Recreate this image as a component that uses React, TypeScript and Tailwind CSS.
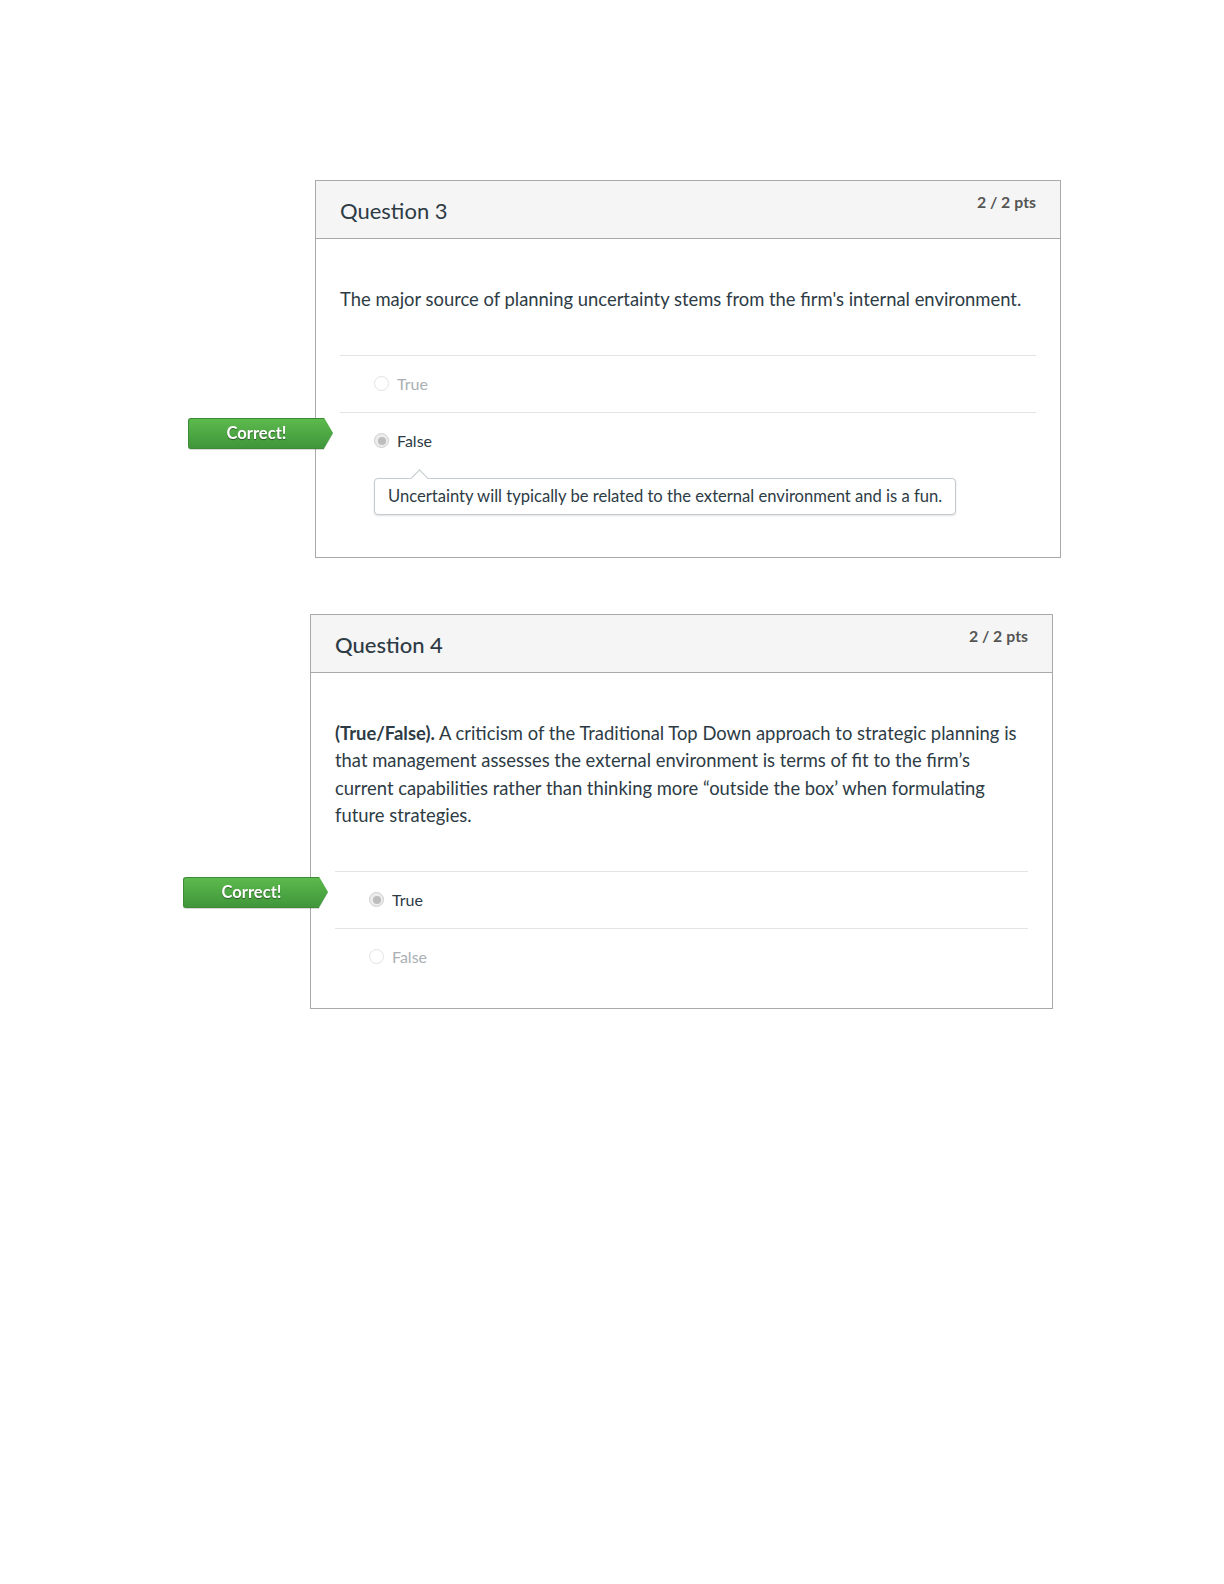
import * as React from "react";

type Answer = { label: string; selected: boolean; correct?: boolean; comment?: string };

type Question = {
  title: string;
  titleWeight: string;
  points: string;
  body: React.ReactNode;
  answers: Answer[];
  offset: string;
  width: string;
  footer: string;
};

const FONT = "font-['Lato','Open_Sans','Liberation_Sans',sans-serif]";

const QUESTIONS: Question[] = [
  {
    title: "Question 3",
    titleWeight: "font-normal",
    points: "2 / 2",
    body: <>The major source of planning uncertainty stems from the firm's internal environment.</>,
    answers: [
      { label: "True", selected: false },
      {
        label: "False",
        selected: true,
        correct: true,
        comment: "Uncertainty will typically be related to the external environment and is a fun.",
      },
    ],
    offset: "ml-[315px]",
    width: "w-[746px]",
    footer: "pb-[23px]",
  },
  {
    title: "Question 4",
    titleWeight: "font-medium",
    points: "2 / 2",
    body: (
      <>
        <span className="font-bold">(True/False).</span> A criticism of the Traditional Top Down approach to strategic
        planning is
        <br />
        that management assesses the external environment is terms of fit to the firm’s
        <br />
        current capabilities rather than thinking more “outside the box’ when formulating
        <br />
        future strategies.
      </>
    ),
    answers: [
      { label: "True", selected: true, correct: true },
      { label: "False", selected: false },
    ],
    offset: "ml-[310px]",
    width: "w-[743px]",
    footer: "pb-[23px]",
  },
];

function CorrectFlag() {
  return (
    <div className="absolute left-[-152px] top-[5px] flex h-[31px] drop-shadow-[0_1px_0_rgba(0,0,0,0.15)]">
      <div className="flex w-[136px] items-center justify-center rounded-l-[3px] border border-r-0 border-[#3d8b35] bg-gradient-to-b from-[#5cba4d] to-[#40963a] text-[16.5px] font-bold text-white [text-shadow:0_1px_1px_rgba(0,0,0,0.45)]">
        Correct!
      </div>
      <div className="h-[31px] w-[9px] bg-gradient-to-b from-[#5cba4d] to-[#40963a] [clip-path:polygon(0_0,100%_50%,0_100%)]" />
    </div>
  );
}

function Radio({ checked }: { checked: boolean }) {
  return checked ? (
    <span className="flex h-[15px] w-[15px] shrink-0 items-center justify-center rounded-full border border-[#cfcfcf] bg-[#ececec]">
      <span className="h-[8px] w-[8px] rounded-full bg-[#bdbdbd]" />
    </span>
  ) : (
    <span className="h-[15px] w-[15px] shrink-0 rounded-full border border-[#e2e2e2] bg-white" />
  );
}

function AnswerRow({ answer }: { answer: Answer }) {
  return (
    <div className="relative border-t border-[#e2e4e6]">
      {answer.correct && <CorrectFlag />}
      <div className="flex h-[56px] items-center gap-[8px] pl-[34px]">
        <Radio checked={answer.selected} />
        <span className={answer.selected ? "text-[16px] text-[#2d3b45]" : "text-[16px] text-[#aab0b4]"}>
          {answer.label}
        </span>
      </div>
      {answer.comment && (
        <div className="pb-[19px] pl-[34px] pt-[9px]">
          <div className="relative inline-block rounded-[4px] border border-[#c4cace] bg-white px-[13px] py-[7px] text-[16.6px] leading-[21px] text-[#2d3b45] shadow-[0_1px_2px_rgba(0,0,0,0.12)]">
            <span className="absolute left-[38px] top-[-7px] h-[13px] w-[13px] rotate-45 border-l border-t border-[#c4cace] bg-white" />
            <span className="relative">{answer.comment}</span>
          </div>
        </div>
      )}
    </div>
  );
}

function QuestionCard({ q }: { q: Question }) {
  return (
    <section className={`${q.offset} ${q.width} border border-[#a9a9a9] bg-white`}>
      <header className="flex h-[58px] items-start justify-between border-b border-[#a9a9a9] bg-[#f5f5f5] px-6">
        <h2 className={`mt-[16px] text-[22px] leading-[28px] text-[#2d3b45] ${q.titleWeight}`}>{q.title}</h2>
        <div className="mt-[11px] text-[15.8px] leading-[20px] text-[#555]">
          <span className="font-bold">{q.points}</span> <span className="font-bold">pts</span>
        </div>
      </header>
      <div className={`px-6 pt-[47px] ${q.footer}`}>
        <div className="pb-[41px] text-[18.4px] leading-[27.5px] text-[#2d3b45]">{q.body}</div>
        <div>
          {q.answers.map((a) => (
            <AnswerRow key={a.label} answer={a} />
          ))}
        </div>
      </div>
    </section>
  );
}

export default function App() {
  return (
    <main className={`${FONT} min-h-[1584px] w-[1224px] bg-white pt-[180px]`}>
      <div className="flex flex-col gap-[56px]">
        {QUESTIONS.map((q) => (
          <QuestionCard key={q.title} q={q} />
        ))}
      </div>
    </main>
  );
}
